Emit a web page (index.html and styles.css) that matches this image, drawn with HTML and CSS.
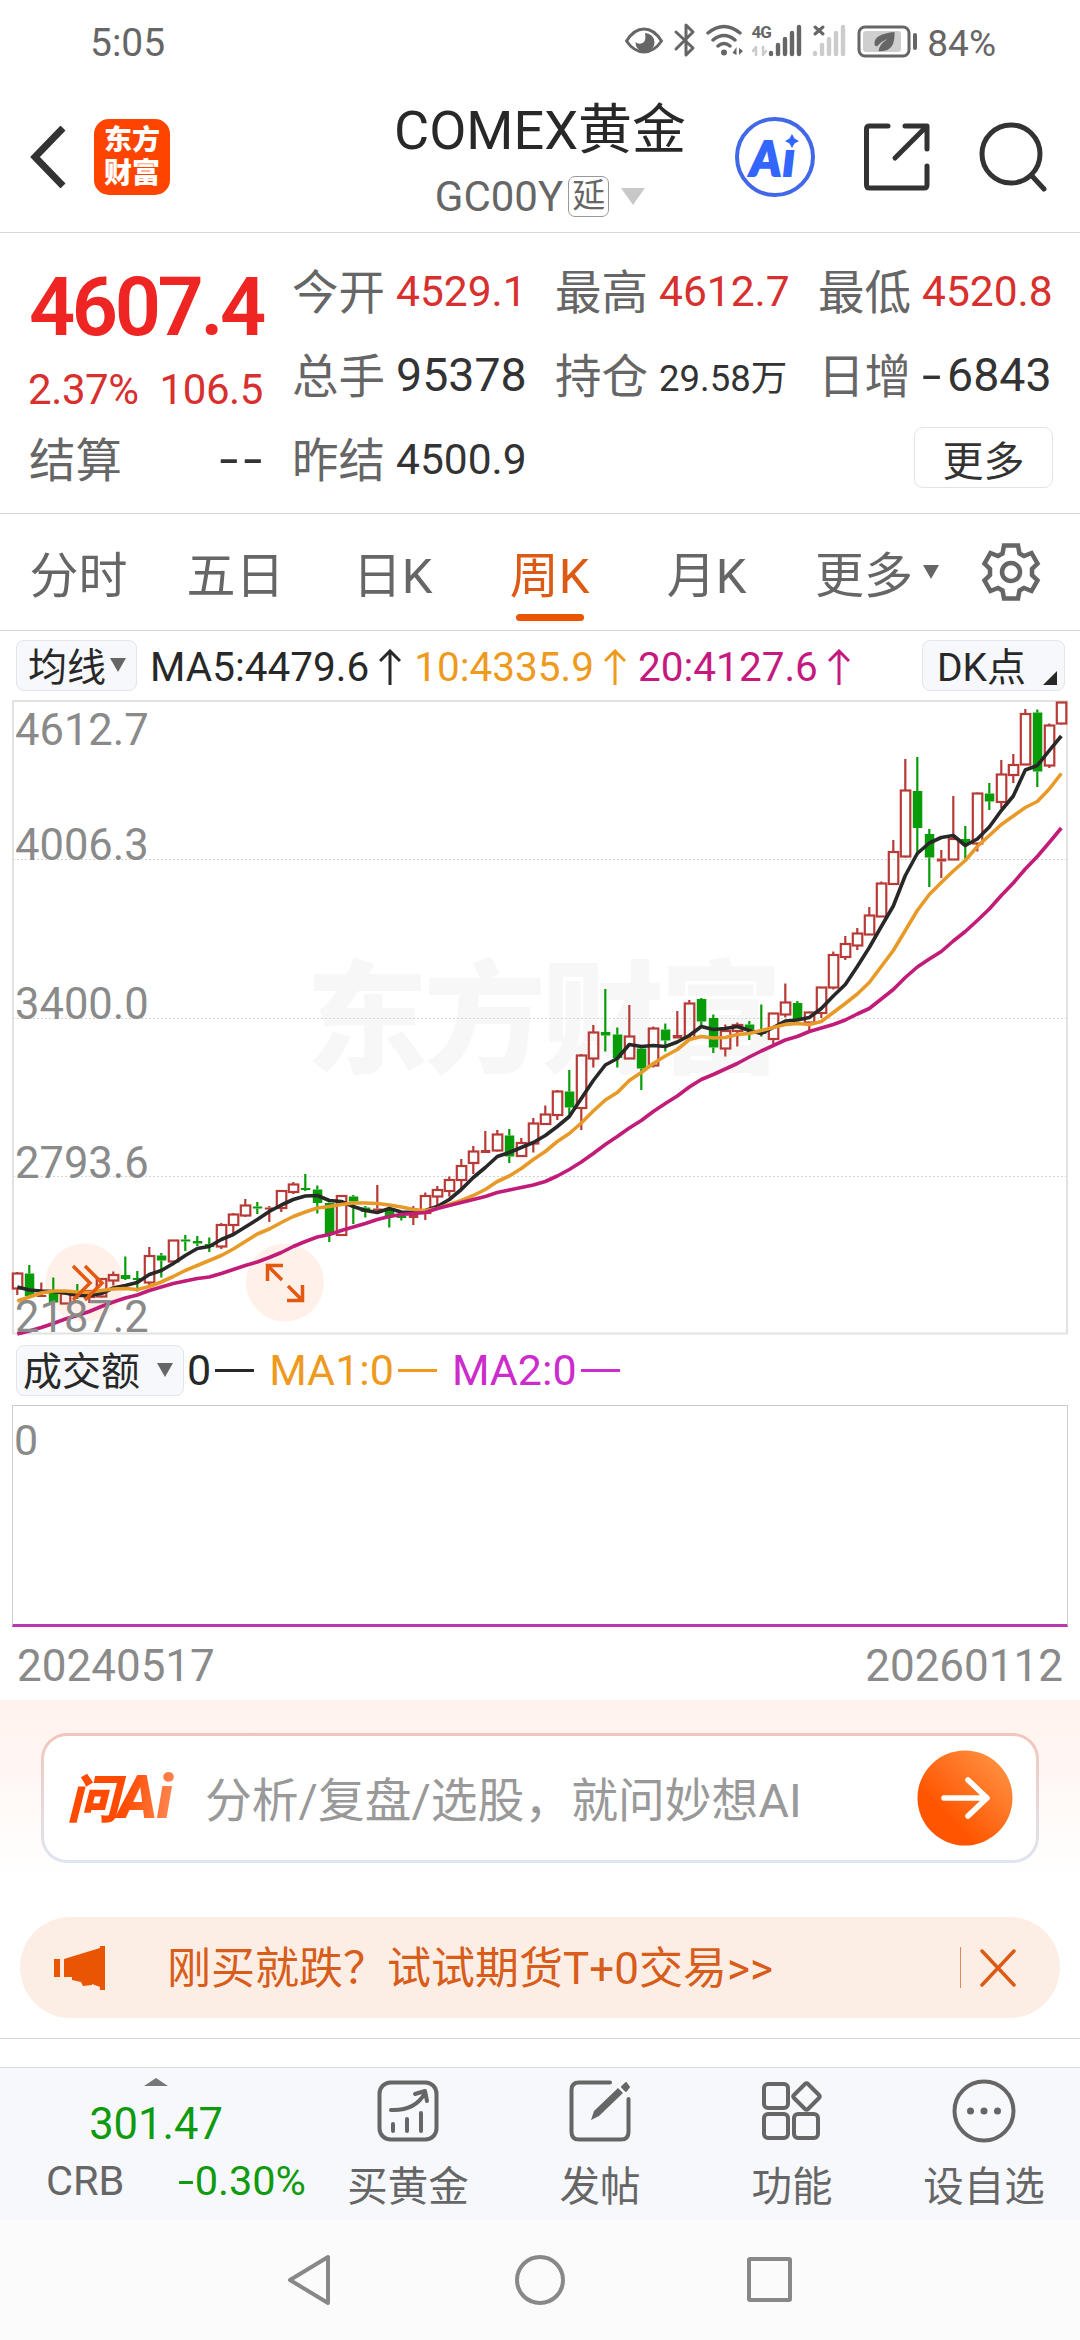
FILE: index.html
```html
<!DOCTYPE html>
<html lang="zh-CN">
<head>
    <meta charset="UTF-8">
    <meta name="viewport" content="width=device-width, initial-scale=1.0">
    <title>COMEX黄金 GC00Y</title>
    <link rel="stylesheet" href="styles.css">
</head>
<body>
    <!-- Status bar -->
    <div class="status-bar">
        <span class="clock">5:05</span>
        <div class="status-right">
            <svg class="status-icons" width="300" height="40" viewBox="620 20 300 40" fill="none" stroke="#666" stroke-linecap="round" stroke-linejoin="round">
                <!-- eye -->
                <path d="M626.500 41Q634 29 644 29T661.500 41Q654 52 644 52T626.500 41Z" stroke-width="3"/>
                <path d="M645 33a9.500 9.500 0 1 1-9.500 9q3 3 7 1t2.500-10z" fill="#666" stroke="none"/>
                <!-- bluetooth -->
                <path d="M676 32l17 16-7 7V25l7 7-17 17" stroke-width="3"/>
                <!-- wifi -->
                <path d="M708 33q16-13 32 0M713 40q11-9 22 0M718 46q6-5 12 0" stroke-width="3.500"/>
                <circle cx="724" cy="52.500" r="3" fill="#666" stroke="none"/>
                <path d="M732.500 53l4-6v8zM739 48v7l4-4z" fill="#666" stroke="none"/>
                <!-- sim 1 -->
                <text class="net-type" x="751.500" y="38">4G</text>
                <path d="M756 55v-8l-3 4M763 47v8l3-4" stroke="#ccc" stroke-width="2.500"/>
                <path d="M771 54v-1M778 54v-9M785 54V39M792 54V33M799 54V27" stroke-width="4.400"/>
                <!-- sim 2 -->
                <path d="M815 27l8 7M823 27l-8 7" stroke-width="3"/>
                <path d="M815 54v-1M822 54v-9M829 54V39M836 54V33M843 54V27" stroke="#ccc" stroke-width="4.400"/>
                <!-- battery -->
                <rect x="859" y="27" width="50" height="29" rx="6" stroke-width="3"/>
                <rect x="863" y="31" width="38" height="21" rx="3" fill="#cfcfcf" stroke="none"/>
                <path d="M894.500 32q-20 2-20 11 0 4 3 3 4-5 10-7-8 5-9 12 17 2 16-19z" fill="#666" stroke="none"/>
                <path d="M915 35v13" stroke-width="4"/>
            </svg>
            <span class="battery-level">84%</span>
        </div>
    </div>

    <!-- Header -->
    <header class="header">
        <div class="header-left">
            <svg width="36" height="62" viewBox="0 0 36 62" fill="none" stroke="#333" stroke-width="7">
                <path d="M33 2L5 31l28 29"/>
            </svg>
            <div class="logo"><span>东方</span><span>财富</span></div>
        </div>
        <div class="header-title">
            <h1>COMEX黄金</h1>
            <div class="symbol">
                <span>GC00Y</span><span class="delay">延</span><i class="tri tri-light"></i>
            </div>
        </div>
        <div class="header-right">
            <div class="ai-badge">
                <span class="ai-text">Aı</span>
                <svg class="ai-star" width="14" height="14" viewBox="0 0 14 14"><path d="M7 0l2.500 4.500L14 7 9.500 9.500 7 14 4.500 9.500 0 7 4.500 4.500z" fill="#3366ff"/></svg>
            </div>
            <svg width="66" height="68" viewBox="0 0 66 68" fill="none" stroke="#333" stroke-width="5" stroke-linecap="round" stroke-linejoin="round">
                <path d="M24 3H5.500Q2.500 3 2.500 6V62Q2.500 65 5.500 65H60Q63 65 63 62V43M41 3H63V26M31 35L61 5"/>
            </svg>
            <svg width="68" height="70" viewBox="0 0 68 70" fill="none" stroke="#333" stroke-width="5" stroke-linecap="round">
                <circle cx="32" cy="32" r="29"/>
                <path d="M53 54L65 67"/>
            </svg>
        </div>
    </header>

    <!-- Quote -->
    <section class="quote">
        <div class="quote-main">
            <div class="price">4607.4</div>
            <div class="change"><span>2.37%</span><span>106.5</span></div>
            <div class="settle"><span class="label">结算</span><span class="dashes">--</span></div>
        </div>
        <div class="quote-grid">
            <div class="cell"><span class="label">今开</span><span class="val up">4529.1</span></div>
            <div class="cell"><span class="label">最高</span><span class="val up">4612.7</span></div>
            <div class="cell"><span class="label">最低</span><span class="val up">4520.8</span></div>
            <div class="cell"><span class="label">总手</span><span class="val big">95378</span></div>
            <div class="cell"><span class="label">持仓</span><span class="val small">29.58万</span></div>
            <div class="cell"><span class="label">日增</span><span class="val big"><span class="minus">-</span>6843</span></div>
            <div class="cell"><span class="label">昨结</span><span class="val">4500.9</span></div>
            <button class="more-btn">更多</button>
        </div>
    </section>

    <!-- Period tabs -->
    <nav class="tabs">
        <span class="tab">分时</span>
        <span class="tab">五日</span>
        <span class="tab">日K</span>
        <span class="tab active">周K</span>
        <span class="tab">月K</span>
        <span class="tab">更多<i class="tri"></i></span>
        <svg width="60" height="60" viewBox="-30 -30 60 60" fill="none" stroke="#666" stroke-width="4.500">
            <path d="M-7-26.500H7L8.500-18.500 13-16 20.500-19 26.500-8.500 21-3V3L26.500 8.500 20.500 19 13 16 8.500 18.500 7 26.500H-7L-8.500 18.500-13 16-20.500 19-26.500 8.500-21 3V-3L-26.500-8.500-20.500-19-13-16-8.500-18.500Z"/>
            <circle r="9"/>
        </svg>
    </nav>

    <!-- K line -->
    <div class="indicator">
        <span class="chip">均线<i class="tri"></i></span>
        <span class="ma ma5">MA5:4479.6<svg class="arrow" viewBox="0 0 22 36"><path d="M11 36V3M1 12L11 2l10 10"/></svg></span>
        <span class="ma ma10">10:4335.9<svg class="arrow" viewBox="0 0 22 36"><path d="M11 36V3M1 12L11 2l10 10"/></svg></span>
        <span class="ma ma20">20:4127.6<svg class="arrow" viewBox="0 0 22 36"><path d="M11 36V3M1 12L11 2l10 10"/></svg></span>
        <span class="chip chip-dk">DK点<i class="corner"></i></span>
    </div>
    <svg id="kline" class="kline" width="1056" height="635" viewBox="0 0 1056 635" fill="none">
        <text class="watermark" x="294" y="363" textLength="476">东方财富</text>
        <path d="M1 159.500H1055M1 318.500H1055M1 476.500H1055" stroke="#d4d4d4" stroke-dasharray="2 2"/>
        <rect x="1" y="1" width="1054" height="632.500" stroke="#e2e2e2" stroke-width="2"/>
        <circle cx="72.500" cy="582.500" r="39" fill="#fff0e9"/>
        <circle cx="273" cy="582.500" r="39" fill="#fff0e9"/>
        <g id="candles"></g>
        <g id="averages" stroke-width="3.600" stroke-linejoin="round"></g>
        <g class="axis">
            <text x="3" y="45">4612.7</text>
            <text x="3" y="160">4006.3</text>
            <text x="3" y="319">3400.0</text>
            <text x="3" y="478">2793.6</text>
            <text x="3" y="632">2187.2</text>
        </g>
        <path d="M61 566l17 17-17 17M73 566l17 17-17 17M255.500 581V565.500H271M256 566l14 14M290.500 585V600.500H275M290 600l-14-14" stroke="#e2590f" stroke-width="3.500"/>
    </svg>

    <!-- Turnover -->
    <div class="indicator turnover">
        <span class="chip chip-vol">成交额<i class="tri"></i></span>
        <span class="vol">0<i class="dash"></i></span>
        <span class="vol ma10">MA1:0<i class="dash"></i></span>
        <span class="vol purple">MA2:0<i class="dash"></i></span>
    </div>
    <div class="volume">0</div>
    <div class="dates"><span>20240517</span><span>20260112</span></div>

    <!-- Ask AI -->
    <section class="ask">
        <div class="ask-box">
            <span class="ask-logo">问<span class="ask-ai">Ai</span></span>
            <span class="ask-hint">分析/复盘/选股，就问妙想AI</span>
            <svg width="96" height="96" viewBox="0 0 96 96" fill="none">
                <defs>
                    <linearGradient id="go" x1="0.3" y1="0.700" x2="0.900" y2="0.100">
                        <stop offset="0" stop-color="#ff5500"/>
                        <stop offset="1" stop-color="#ff9142"/>
                    </linearGradient>
                </defs>
                <circle cx="48" cy="48" r="47.500" fill="url(#go)"/>
                <path d="M27 48H68M51 30L70 48 51 66" stroke="#fff" stroke-width="5.500" stroke-linecap="round" stroke-linejoin="round"/>
            </svg>
        </div>
    </section>

    <!-- Promo banner -->
    <div class="banner">
        <svg width="52" height="46" viewBox="0 0 52 46" fill="#ea5504">
            <path d="M0 14h6v18H0zM10 14L46 3V1h5v44h-5v-3L38 39v1L29 41 27 37 18 35V32H10z"/>
        </svg>
        <span class="banner-text">刚买就跌？试试期货T+0交易&gt;&gt;</span>
        <i class="banner-line"></i>
        <svg width="36" height="38" viewBox="0 0 36 38" stroke="#dd5a14" stroke-width="3.500" stroke-linecap="round">
            <path d="M2 2L34 36M34 2L2 36"/>
        </svg>
    </div>

    <!-- Bottom bar -->
    <footer class="toolbar">
        <div class="index">
            <i class="tri-up"></i>
            <div class="index-price">301.47</div>
            <div class="index-row"><span>CRB</span><span class="down"><span class="minus-sm">-</span>0.30%</span></div>
        </div>
        <div class="tool">
            <svg width="64" height="64" viewBox="0 0 64 64">
                <rect x="3.500" y="3.500" width="57" height="57" rx="11"/>
                <path d="M15 31Q39 32 49 14M39 15L49 12 51 22M17 45v7M31 40v12M45 34v18"/>
            </svg>
            <span>买黄金</span>
        </div>
        <div class="tool">
            <svg width="64" height="64" viewBox="0 0 64 64">
                <path d="M42 3.500H11Q3.500 3.500 3.500 11V53Q3.500 60.500 11 60.500H53Q60.500 60.500 60.500 53V20"/>
                <path d="M23 41l3-9L50 9l5 5-24 23z" fill="#666" stroke="none"/>
                <path d="M54 8l4-4 3 4-3 4z" fill="#666" stroke-width="2"/>
            </svg>
            <span>发帖</span>
        </div>
        <div class="tool">
            <svg width="64" height="64" viewBox="0 0 64 64">
                <rect x="4" y="5" width="24" height="24" rx="4"/>
                <rect x="4" y="35" width="24" height="24" rx="4"/>
                <rect x="34" y="35" width="24" height="24" rx="4"/>
                <path d="M45 5q1.500-1.500 3 0L59 16q1.500 1.500 0 3L48 30q-1.500 1.500-3 0L34 19q-1.500-1.500 0-3z"/>
            </svg>
            <span>功能</span>
        </div>
        <div class="tool">
            <svg width="64" height="64" viewBox="0 0 64 64">
                <circle cx="32" cy="32" r="29.500"/>
                <g fill="#666" stroke="none"><circle cx="18.500" cy="32" r="3.500"/><circle cx="32" cy="32" r="3.500"/><circle cx="45.500" cy="32" r="3.500"/></g>
            </svg>
            <span>设自选</span>
        </div>
    </footer>

    <!-- System navigation -->
    <div class="sysnav">
        <svg width="510" height="54" viewBox="0 0 510 54" fill="none" stroke="#888" stroke-width="4" stroke-linejoin="round">
            <path d="M43 4V50L5 27Z"/>
            <circle cx="255" cy="27" r="23"/>
            <rect x="464" y="6" width="41" height="41" rx="1"/>
        </svg>
    </div>

    <script src="chart.js"></script>
</body>
</html>
```
FILE: styles.css
```css
/* Global Styles */
* {
    box-sizing: border-box;
}

body {
    width: 1080px;
    height: 2340px;
    margin: 0;
    background-color: #fff;
    color: #333;
    font-family: Roboto, "Noto Sans CJK SC", sans-serif;
    overflow: hidden;
}

svg {
    display: block;
    flex: none;
}

.tri {
    border-left: 8.5px solid transparent;
    border-right: 8.5px solid transparent;
    border-top: 14px solid #666;
}

.up {
    color: #d7302e;
}

.down {
    color: #109a10;
}

.label {
    padding-bottom: 5px;
    font-size: 46.5px;
    color: #666;
}

/* Status bar */
.status-bar {
    height: 86px;
    padding: 0 84px 0 90px;
    display: flex;
    justify-content: space-between;
    align-items: center;
    color: #666;
    font-size: 39px;
}

.status-right {
    display: flex;
    align-items: center;
    gap: 7px;
}

.status-icons {
    margin-bottom: 6px;
}

.battery-level {
    font-size: 37px;
}

.net-type {
    font-size: 17px;
    font-weight: 700;
    fill: #666;
    stroke: none;
    letter-spacing: -1px;
}

/* Header */
.header {
    height: 147px;
    display: grid;
    grid-template-columns: 345px 390px 345px;
    border-bottom: 1px solid #d8d8d8;
}

.header-left,
.header-right {
    display: flex;
    align-items: center;
    padding-bottom: 4px;
}

.header-left {
    padding-left: 30px;
    gap: 28px;
}

.logo {
    width: 76px;
    height: 76px;
    border-radius: 15px;
    background-color: #ff4400;
    color: #fff;
    display: flex;
    flex-direction: column;
    align-items: center;
    justify-content: center;
    font-size: 28px;
    font-weight: 900;
    line-height: 33px;
}

.header-title {
    padding-top: 12px;
    display: flex;
    flex-direction: column;
    align-items: center;
}

h1 {
    margin: 0;
    font-size: 54px;
    font-weight: 400;
    line-height: 66px;
    color: #282828;
}

.symbol {
    height: 64px;
    display: flex;
    align-items: center;
    font-size: 42px;
    color: #666;
}

.delay {
    width: 41px;
    height: 41px;
    margin: 0 12px 0 5px;
    border: 1.5px solid #999;
    border-radius: 7px;
    font-size: 33px;
    line-height: 38px;
    text-align: center;
}

.tri-light {
    border-left-width: 12.5px;
    border-right-width: 12.5px;
    border-top: 17px solid #c8c8c8;
}

.header-right {
    gap: 49px;
}

.ai-badge {
    position: relative;
    width: 80px;
    height: 80px;
    border: 4.5px solid #4068e8;
    border-radius: 50%;
    display: flex;
    align-items: center;
    justify-content: center;
    color: #3366ff;
}

.ai-text {
    font-family: Lato, sans-serif;
    font-size: 47px;
    font-weight: 900;
    font-style: italic;
    letter-spacing: 2px;
    padding: 2px 3px 0 0;
    -webkit-text-stroke: 2px #3366ff;
}

.ai-star {
    position: absolute;
    left: 46px;
    top: 13px;
}

/* Quote */
.quote {
    height: 281px;
    padding: 16px 27px 0 29px;
    display: grid;
    grid-template-columns: 263px 761px;
    border-bottom: 1px solid #d8d8d8;
}

.quote-main {
    width: 234px;
}

.price {
    font-size: 81px;
    font-weight: 600;
    line-height: 117px;
    letter-spacing: -3.4px;
    color: #ee2522;
}

.change {
    margin-left: -1px;
    display: flex;
    justify-content: space-between;
    font-size: 42px;
    line-height: 48px;
    letter-spacing: -0.4px;
    color: #d7302e;
}

.settle {
    margin-top: 3px;
    height: 84px;
    display: flex;
    justify-content: space-between;
    align-items: center;
}

.dashes {
    font-size: 50px;
    letter-spacing: 4px;
    transform: scaleX(1.35);
    transform-origin: right;
    margin-right: -5px;
}

.quote-grid {
    display: grid;
    grid-template-columns: 263px 263px 235px;
    grid-template-rows: repeat(3, 84px);
}

.cell {
    width: 235px;
    display: flex;
    align-items: center;
    justify-content: space-between;
}

.val {
    width: 131px;
    font-size: 42.5px;
    white-space: nowrap;
}

.val.big {
    font-size: 46.5px;
    display: flex;
}

.val.small {
    font-size: 36.5px;
}

.minus {
    width: 25px;
    transform: scaleX(1.5);
    transform-origin: left;
}

.more-btn {
    grid-column: 3;
    justify-self: end;
    align-self: center;
    width: 139px;
    height: 61px;
    margin: 0 0 4px;
    padding: 0 0 5px;
    border: 1.5px solid #e3e3e3;
    border-radius: 9px;
    background-color: #fff;
    color: #333;
    font-family: inherit;
    font-size: 41px;
}

/* Tabs */
.tabs {
    height: 117px;
    display: grid;
    grid-template-columns: repeat(5, 157px) 184px 83px;
    justify-items: center;
    align-items: center;
    border-bottom: 1px solid #d8d8d8;
    font-size: 49px;
    color: #666;
}

.tab {
    height: 100%;
    display: flex;
    align-items: center;
    padding-bottom: 1px;
}

.tab .tri {
    margin-left: 10px;
}

.tab.active {
    position: relative;
    color: #dc5a14;
}

.tab.active::after {
    content: "";
    position: absolute;
    left: 50%;
    bottom: 9px;
    width: 68px;
    height: 7px;
    margin-left: -34px;
    border-radius: 4px;
    background-color: #ea5504;
}

/* Indicator rows */
.indicator {
    height: 69px;
    padding: 0 15px 0 16px;
    display: flex;
    align-items: center;
    color: #282828;
    font-size: 40.5px;
}

.chip {
    width: 121px;
    height: 51px;
    padding: 0 10px 4px 11px;
    display: flex;
    align-items: center;
    justify-content: space-between;
    border: 1.5px solid #e2e5ea;
    border-radius: 8px;
    background-color: #f6f8fb;
    font-size: 39px;
}

.chip .tri {
    margin-top: 3px;
}

.chip-dk {
    width: 143px;
    margin-left: auto;
    padding: 0 7px 3px 14px;
}

.corner {
    align-self: flex-end;
    margin-bottom: 2px;
    border-left: 14px solid transparent;
    border-bottom: 14px solid #282828;
}

.ma {
    display: flex;
    align-items: center;
    margin-left: 13px;
    padding-top: 2px;
}

.arrow {
    width: 22px;
    height: 36px;
    margin-left: 10px;
    fill: none;
    stroke: currentColor;
    stroke-width: 3;
}

.ma5 {
    margin-left: 13px;
}

.ma10 {
    color: #ee9a1e;
}

.ma20 {
    margin-left: 12px;
    color: #c41a80;
}

/* K line chart */
.kline {
    margin-left: 12px;
    overflow: visible;
}

.watermark {
    font-size: 122px;
    font-weight: 900;
    fill: #f7f7f7;
}

.axis {
    font-size: 43.5px;
    fill: #8a8a8a;
}

/* Turnover */
.turnover {
    height: 70px;
    font-size: 43px;
}

.chip-vol {
    width: 168px;
    padding-left: 6px;
}

.vol {
    display: flex;
    align-items: center;
    margin-left: 3px;
}

.vol + .vol {
    margin-left: 15px;
}

.dash {
    width: 39px;
    height: 3px;
    margin-left: 4px;
    background-color: currentColor;
}

.purple {
    color: #cc2ccc;
}

.volume {
    width: 1056px;
    height: 222px;
    margin-left: 12px;
    padding: 8px 1px;
    border: 1px solid #ccc;
    border-bottom: 3px solid #b83ab0;
    color: #8a8a8a;
    font-size: 43px;
    line-height: 52px;
}

.dates {
    height: 73px;
    padding: 4px 17px 0;
    display: flex;
    justify-content: space-between;
    color: #8a8a8a;
    font-size: 44px;
    line-height: 70px;
}

/* Ask AI */
.ask {
    height: 217px;
    padding: 33px 41px 0;
    background: linear-gradient(#fff2ed, #fff 180px);
}

.ask-box {
    height: 130px;
    padding: 0 23px 0 23px;
    display: flex;
    align-items: center;
    border: 3px solid transparent;
    border-radius: 26px;
    background: linear-gradient(#fff, #fff) padding-box, linear-gradient(#f3c5bb, #dfe6f2) border-box;
}

.ask-logo {
    width: 114px;
    padding: 0 0 6px 0;
    font-size: 52px;
    font-weight: 900;
    font-style: italic;
    letter-spacing: -1px;
    white-space: nowrap;
    color: transparent;
    background: linear-gradient(100deg, #ff4a00 50%, #ff9a6a);
    background-clip: text;
}

.ask-ai {
    font-size: 60px;
}

.ask-hint {
    flex: 1;
    margin-left: 24px;
    padding-bottom: 4px;
    font-size: 46.8px;
    color: #999;
}

/* Banner */
.banner {
    height: 101px;
    margin: 0 20px;
    padding: 0 44px 0 34px;
    display: flex;
    align-items: center;
    border-radius: 51px;
    background-color: #fdeee5;
}

.banner-text {
    flex: 1;
    margin-left: 61px;
    padding-bottom: 6px;
    font-size: 44px;
    color: #d85c1a;
}

.banner-line {
    width: 1.5px;
    height: 41px;
    margin-right: 19px;
    background-color: #dd8a5a;
}

/* Toolbar */
.toolbar {
    position: relative;
    height: 153px;
    margin-top: 49px;
    display: grid;
    grid-template-columns: 312px repeat(4, 192px);
    border-top: 1px solid #d4d7dc;
    background-color: #f6f8fb;
    color: #666;
}

.toolbar::before {
    content: "";
    position: absolute;
    left: 0;
    right: 0;
    top: -30px;
    height: 1px;
    background-color: #d8d8d8;
}

.index {
    display: flex;
    flex-direction: column;
    align-items: center;
    padding-top: 10px;
}

.tri-up {
    border-left: 12px solid transparent;
    border-right: 12px solid transparent;
    border-bottom: 8px solid #777;
}

.index-price {
    margin-top: 14px;
    font-size: 43.5px;
    line-height: 50px;
    color: #109a10;
}

.index-row {
    width: 260px;
    margin-left: 40px;
    display: flex;
    justify-content: space-between;
    font-size: 41.5px;
    line-height: 62px;
}

.minus-sm {
    display: inline-block;
    width: 17px;
    transform: scaleX(1.4);
    transform-origin: left;
}

.tool {
    display: flex;
    flex-direction: column;
    align-items: center;
    padding-top: 11px;
    font-size: 40.5px;
    line-height: 88px;
}

.tool svg {
    fill: none;
    stroke: #666;
    stroke-width: 4;
    stroke-linecap: round;
    stroke-linejoin: round;
}

/* System navigation */
.sysnav {
    height: 120px;
    display: flex;
    align-items: center;
    justify-content: center;
    background-color: #fbfbfb;
}
```
FILE: chart.js
```js
// Weekly candles: [direction, high, body top, body bottom, low], r = up, g = down
const candles = [
    ["r",1272,1273.5,1288.5,1295], ["g",1265,1273.5,1296,1296], ["r",1282.5,1295,1297,1297], ["g",1277.5,1291.5,1302.5,1302.5],
    ["r",1292.5,1293.5,1303.5,1303.5], ["g",1284,1293,1295,1299], ["r",1290,1291,1297,1303], ["r",1278.5,1279,1296.5,1297.5],
    ["r",1271.5,1275,1280.5,1285.5], ["g",1256.5,1275,1279,1280], ["g",1271,1278,1280,1291.5], ["r",1247,1256,1282.5,1286.5],
    ["g",1253,1255.5,1260.5,1277.5], ["r",1240.5,1240.5,1261.5,1261.5], ["g",1235,1239.5,1241.5,1251], ["g",1236,1241,1243.5,1246],
    ["g",1237.5,1244,1247,1252], ["r",1223,1225,1246.5,1249], ["r",1213,1214.5,1225,1233], ["r",1199,1205.5,1215.5,1217],
    ["g",1202,1206.5,1208.5,1214], ["r",1206,1207.5,1209,1222], ["r",1190,1191,1208,1212], ["r",1182,1184.5,1192,1194],
    ["g",1174,1188,1190,1191], ["g",1185.5,1189.5,1203,1213.5], ["g",1202.5,1203,1235,1242], ["r",1196,1196,1235,1235],
    ["g",1195,1196.5,1201.5,1224], ["g",1206,1207.5,1212,1217.5], ["r",1185,1208.5,1210.5,1211.5], ["g",1206,1208,1216.5,1227.5],
    ["g",1212,1216,1218,1220.5], ["r",1206,1215,1218,1225], ["r",1192.5,1196,1213,1220], ["r",1186,1190,1196.5,1206],
    ["r",1176.5,1180,1191,1196.5], ["r",1159,1166,1180,1190], ["r",1146,1151.5,1163,1174], ["r",1131,1150,1153,1153],
    ["r",1130,1134.5,1150.5,1151.5], ["g",1129,1135.5,1156.5,1163], ["r",1138,1143,1156,1157], ["r",1118,1123.5,1143.5,1152.5],
    ["r",1105.5,1114.5,1124,1124], ["r",1090,1091.5,1115,1120], ["g",1070,1091.5,1107.5,1114.5], ["r",1054,1055.5,1108,1130],
    ["r",1025,1032.5,1058.5,1067.5], ["g",989,1032,1035.5,1051.5], ["g",1027.5,1034.5,1058,1067.5], ["r",1005,1036.5,1058.5,1058.5],
    ["g",1046,1048.5,1068.5,1090], ["r",1026.5,1028.5,1065.5,1067.5], ["g",1023.5,1029.5,1040.5,1051.5], ["r",1011,1035,1038.5,1038.5],
    ["r",1000,1003.5,1038,1038], ["g",998,999,1021.5,1025], ["g",1014.5,1018,1047.5,1053], ["r",1024.5,1031,1048.5,1056.5],
    ["r",1022.5,1025,1031,1046.5], ["g",1021,1024.5,1029.5,1040], ["g",1004.5,1031,1034,1036.5], ["r",1013.5,1013.5,1039,1044],
    ["r",983.5,1002.5,1014.5,1017.5], ["g",1001,1003,1020,1020], ["r",1011.5,1012.5,1022.5,1030], ["r",987.5,987.5,1013,1018],
    ["r",951.5,955,987.5,989.5], ["r",936,944,957,960], ["r",928,933.5,945.5,950], ["r",907,915.5,934.5,934.5],
    ["r",881.5,883.5,916.5,916.5], ["r",840,852,884,884], ["r",759,790.5,856.5,857.5], ["g",757,791,828,853],
    ["g",829,834,857.5,887], ["r",850,858.5,861.5,878], ["r",796,839,859.5,859.5], ["g",826,839,844,860],
    ["r",792.5,793.5,843.5,851.5], ["g",783,793.5,801.5,810], ["r",760,774.5,802,808], ["r",754,765,775,783],
    ["r",709,714,764.5,764.5], ["g",709.5,712.5,771.5,787], ["r",723.5,725.5,765.5,768], ["r",702.5,702.5,723.5,724.5]
];

const ma20 = [1334,1331,1327.5,1323.5,1319,1315.5,1311.5,1306.5,1302,1298,1295,1290.5,1287,1283.5,1281,1278.5,1277,1273.5,1269.5,1265.5,1262,1257.5,1252.5,1246.5,1241.5,1237,1234.5,1230.5,1227,1223.5,1219.5,1216.5,1214.5,1213.5,1212.5,1208.5,1205.5,1202.5,1199.5,1196.5,1192.5,1190,1187.5,1185,1181.5,1176,1169.5,1162,1153.5,1144.5,1136.5,1128,1120.5,1111.5,1103.5,1096,1087,1079.5,1074.5,1069,1063.5,1057,1051,1045.5,1040,1036.5,1031.5,1028,1024.5,1020,1014,1008.5,999,989.5,977.5,967,959,951.5,941,931.5,920.5,909,895.5,883,869,856.5,842.5,828];
const ma10 = [1301,1297,1293,1291,1291,1292,1292.5,1290.5,1289,1288.5,1289.5,1286.5,1282,1276.5,1270.5,1265.5,1260.5,1255.5,1249,1241.5,1234,1229,1222.5,1216.5,1212,1208,1206.5,1204.5,1203,1203,1203.5,1205,1207,1209.5,1210.5,1208.5,1204.5,1200.5,1195.5,1189.5,1181.5,1176,1168.5,1159.5,1151.5,1141.5,1133.5,1123,1111,1100,1092.5,1080.5,1072.5,1063.5,1056,1049.5,1039.5,1036.5,1038,1037.5,1034.5,1033.5,1030.5,1027.5,1024.5,1023.5,1024.5,1021.5,1012.5,1003.5,994,982.5,966.5,950.5,930.5,910.5,894.5,882.5,871,860.5,846.5,835.5,824.5,816,807.5,801.5,789,773.5];
const ma5 = [1287,1290,1291,1291.5,1293,1295.5,1295.5,1293.5,1288,1285.5,1282.5,1274.5,1270.5,1263.5,1255.5,1248.5,1246.5,1239.5,1234.5,1227,1219.5,1211.5,1205,1199.5,1196,1195.5,1200.5,1201.5,1206.5,1210.5,1212.5,1208.5,1212,1212.5,1210.5,1206.5,1199.5,1189.5,1177.5,1167.5,1156.5,1152.5,1147.5,1142.5,1135.5,1126.5,1116.5,1098.5,1080.5,1065,1058.5,1044.5,1046.5,1045.5,1046.5,1042,1035.5,1026.5,1029.5,1028.5,1026.5,1030.5,1033.5,1027.5,1021,1020,1017.5,1008.5,996,984.5,966.5,947.5,926.5,906,875.5,853.5,843,837.5,835.5,845.5,839,827,810.5,796,770,765.5,750.5,736];

const TOP = 700;
const STEP = 12;
const LEFT = 5.3;
const RED = "#b83a36";
const GREEN = "#089c08";

function draw(parent, name, attrs) {
    const el = document.createElementNS("http://www.w3.org/2000/svg", name);
    for (const key in attrs) el.setAttribute(key, attrs[key]);
    parent.appendChild(el);
}

const candleGroup = document.getElementById("candles");
candles.forEach(([dir, high, top, bottom, low], i) => {
    const x = LEFT + i * STEP;
    const color = dir === "r" ? RED : GREEN;
    const hollow = dir === "r" && bottom - top > 4;
    const wick = `M${x} ${high - TOP}V${top - TOP}M${x} ${bottom - TOP}V${low - TOP}`;
    draw(candleGroup, "path", { d: wick, stroke: color, "stroke-width": 2.2 });
    if (hollow) {
        draw(candleGroup, "rect", { x: x - 4.5, y: top - TOP, width: 9.5, height: bottom - top, stroke: color, "stroke-width": 2.2 });
    } else {
        draw(candleGroup, "rect", { x: x - 4.5, y: top - TOP, width: 9.5, height: Math.max(bottom - top, 2), fill: color });
    }
});

const averages = document.getElementById("averages");
[[ma5, "#282828"], [ma10, "#e89a28"], [ma20, "#c01c78"]].forEach(([values, color]) => {
    const points = values.map((v, i) => `${LEFT + i * STEP},${v - TOP}`).join(" ");
    draw(averages, "polyline", { points, stroke: color });
});
```
